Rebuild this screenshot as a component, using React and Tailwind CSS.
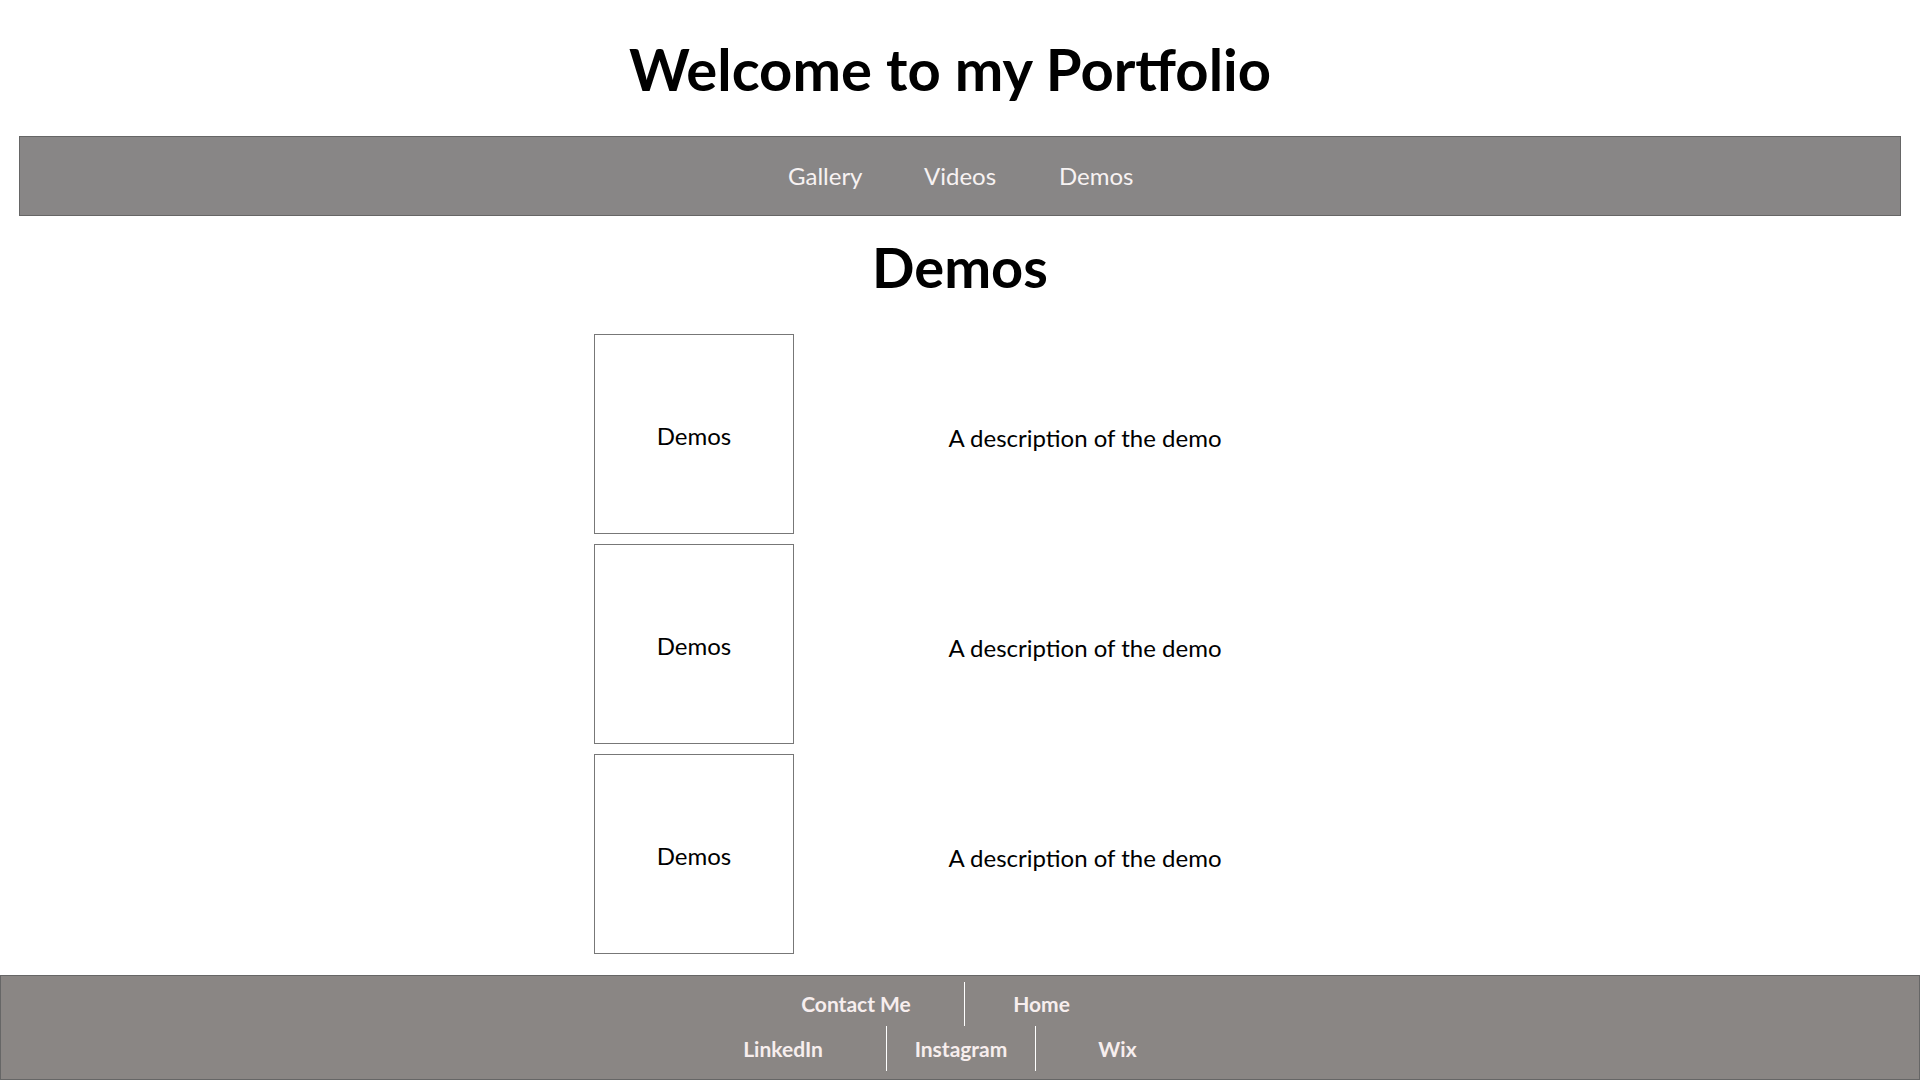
const demos = [1, 2, 3]

const App = () => {
  return (
    <div className="min-h-screen bg-white font-['Lato','Noto_Sans',sans-serif] text-black">
      <header className="h-[136px] flex items-center justify-center pr-[20px]">
        <h1 className="text-[58px] font-bold leading-none pt-[2px]">Welcome to my Portfolio</h1>
      </header>

      <nav className="mx-[19px] h-[80px] border border-[#666666] bg-[#888686] flex items-center justify-center gap-[64px] text-[24px] text-[#f7f2f2]">
        <a href="#" className="w-[72px] text-center">Gallery</a>
        <a href="#" className="w-[71px] text-center">Videos</a>
        <a href="#" className="w-[73px] text-center">Demos</a>
      </nav>

      <main className="flex flex-col items-center">
        <h2 className="h-[118px] flex items-center text-[56px] font-bold leading-none pb-[16px]">Demos</h2>
        <div className="flex flex-col gap-[10px]">
          {demos.map((d) => (
            <div key={d} className="flex items-center w-[732px]">
              <div className="w-[200px] h-[200px] border border-[#777777] flex items-center justify-center pt-[3px] text-[24px]">
                Demos
              </div>
              <p className="flex-1 pl-[50px] pt-[8px] text-center text-[24px] text-black">A description of the demo</p>
            </div>
          ))}
        </div>
      </main>

      <footer className="mt-[21px] h-[105px] border border-[#666666] bg-[#8a8684] pt-[6px] text-[21px] font-bold text-[#f7eeee]">
        <div className="flex h-[44px] pl-[747px]">
          <div className="w-[216px] flex items-center justify-center">Contact Me</div>
          <div className="w-[154px] flex items-center justify-center border-l border-white">Home</div>
        </div>
        <div className="flex h-[45px] pl-[679px]">
          <div className="w-[206px] flex items-center justify-center">LinkedIn</div>
          <div className="w-[149px] flex items-center justify-center border-l border-white">Instagram</div>
          <div className="w-[164px] flex items-center justify-center border-l border-white">Wix</div>
        </div>
      </footer>
    </div>
  )
}

export default App
